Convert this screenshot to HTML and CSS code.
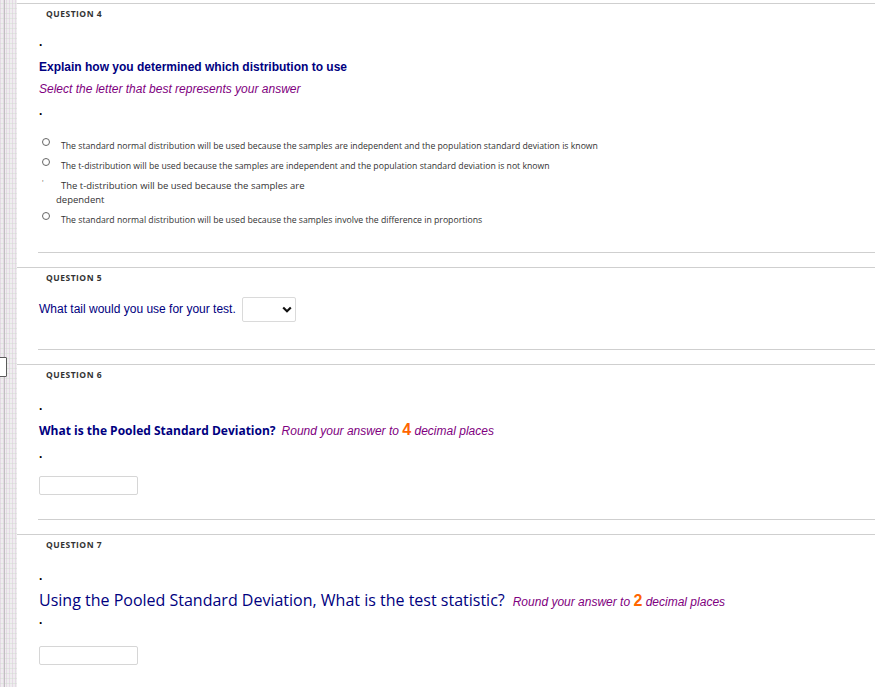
FILE: index.html
```html
<!DOCTYPE html>
<html lang="en">
<head>
<meta charset="utf-8">
<title>Questions</title>
<link rel="stylesheet" href="styles.css">
</head>
<body>
<div class="page">
  <aside class="rail"><span class="rail-tab"></span></aside>
  <main class="main">
    <section class="q q4">
      <h2 class="q-title">QUESTION 4</h2>
      <div class="q-body">
        <p class="dot">.</p>
        <p class="prompt-arial">Explain how you determined which distribution to use</p>
        <p class="hint">Select the letter that best represents your answer</p>
        <p class="dot dot-after-hint">.</p>
        <ul class="options">
          <li class="opt"><span class="radio"></span><span class="opt-text">The standard normal distribution will be used because the samples are independent and the population standard deviation is known</span></li>
          <li class="opt"><span class="radio"></span><span class="opt-text">The t-distribution will be used because the samples are independent and the population standard deviation is not known</span></li>
          <li class="opt opt-big"><span class="tick">'</span><span class="opt-text">The t-distribution will be used because the samples are<br>dependent</span></li>
          <li class="opt"><span class="radio"></span><span class="opt-text">The standard normal distribution will be used because the samples involve the difference in proportions</span></li>
        </ul>
      </div>
    </section>

    <section class="q q5">
      <h2 class="q-title">QUESTION 5</h2>
      <div class="q-body">
        <div class="inline-row">
          <span class="prompt-plain">What tail would you use for your test.</span>
          <span class="select">
            <svg class="chev" width="10" height="7" viewBox="0 0 10 7"><polyline points="1.2,1.5 5,5.2 8.8,1.5" fill="none" stroke="#111" stroke-width="2.2"/></svg>
          </span>
        </div>
      </div>
    </section>

    <section class="q q6">
      <h2 class="q-title">QUESTION 6</h2>
      <div class="q-body">
        <p class="dot dot-top">.</p>
        <p class="prompt-line">
          <span class="prompt-sans-bold">What is the Pooled Standard Deviation?</span>
          <span class="round">Round your answer to <b class="num">4</b> decimal places</span>
        </p>
        <p class="dot">.</p>
        <div class="answer"></div>
      </div>
    </section>

    <section class="q q7">
      <h2 class="q-title">QUESTION 7</h2>
      <div class="q-body">
        <p class="dot dot-top">.</p>
        <p class="prompt-line prompt-line-big">
          <span class="prompt-sans-big">Using the Pooled Standard Deviation, What is the test statistic?</span>
          <span class="round">Round your answer to <b class="num">2</b> decimal places</span>
        </p>
        <p class="dot">.</p>
        <div class="answer"></div>
      </div>
    </section>
  </main>
</div>
</body>
</html>
```

FILE: styles.css
```css
html, body {
  margin: 0;
  padding: 0;
  background: #ffffff;
}

.page {
  display: flex;
  min-height: 687px;
}

.rail {
  position: relative;
  width: 17px;
  flex: 0 0 17px;
  background-color: #efedef;
  background-image:
    repeating-linear-gradient(90deg, rgba(220, 200, 220, 0.5) 0 1px, transparent 1px 3px),
    repeating-linear-gradient(0deg, rgba(200, 222, 200, 0.4) 0 1px, transparent 1px 5px);
}

.rail::after {
  content: "";
  position: absolute;
  left: 4px;
  top: 0;
  bottom: 0;
  width: 1px;
  background: #c2bec2;
}

.rail-tab {
  position: absolute;
  left: -5px;
  top: 357px;
  width: 10px;
  height: 18px;
  border: 1px solid #5a5a5a;
  border-radius: 1px;
  background: #ffffff;
  z-index: 1;
}

.main {
  flex: 1;
  padding-top: 3px;
}

.q {
  border-top: 1px solid #cfcfcf;
}

.q + .q {
  margin-top: 14px;
}

.q-title {
  margin: 0;
  padding-left: 29px;
  font-family: "Open Sans", "DejaVu Sans", sans-serif;
  font-size: 8.5px;
  font-weight: 700;
  letter-spacing: 0.5px;
  line-height: 19px;
  color: #333333;
}

.q-body {
  margin-left: 21px;
  padding-left: 1px;
  border-bottom: 1px solid #cfcfcf;
}

.q7 .q-body { border-bottom: 0; }

.dot {
  margin: 0;
  font-family: "Liberation Sans", Arial, sans-serif;
  font-size: 12px;
  font-weight: 700;
  line-height: 14px;
  color: #000000;
}

.q4 .q-body { padding-bottom: 26px; }
.q4 .dot:first-child { margin-top: 12px; }

.prompt-arial {
  margin: 11px 0 0;
  font-family: "Liberation Sans", Arial, sans-serif;
  font-size: 12px;
  font-weight: 700;
  line-height: 14px;
  color: #000080;
}

.hint {
  margin: 8px 0 0;
  font-family: "Liberation Sans", Arial, sans-serif;
  font-size: 12px;
  font-style: italic;
  line-height: 14px;
  color: #800080;
}

.dot-after-hint { margin-top: 8px; }

.options {
  list-style: none;
  margin: 22px 0 0;
  padding: 0;
}

.opt {
  display: flex;
  align-items: flex-start;
  font-family: "Open Sans", "DejaVu Sans", sans-serif;
  font-size: 8.7px;
  line-height: 12px;
  color: #333333;
}

.opt + .opt { margin-top: 8px; }
.opt-big + .opt { margin-top: 7px; }
.opt + .opt-big { margin-top: 7px; }

.radio {
  flex: 0 0 8px;
  width: 8px;
  height: 8px;
  margin: -2px 0 0 3px;
  border: 1px solid #666666;
  border-radius: 50%;
  box-sizing: border-box;
  background: #ffffff;
}

.tick {
  flex: 0 0 8px;
  width: 8px;
  margin-left: 3px;
  font-size: 7px;
  line-height: 8px;
  color: #555555;
}

.opt-text {
  margin-left: 6px;
  text-indent: 5px;
}

.opt-big {
  font-size: 9.5px;
  line-height: 14px;
}

/* Question 5 */
.q5 .q-body { padding-bottom: 27px; }

.inline-row {
  display: flex;
  align-items: center;
  gap: 6px;
  margin-top: 10px;
}

.prompt-plain {
  font-family: "Liberation Sans", Arial, sans-serif;
  font-size: 12px;
  line-height: 14px;
  color: #000080;
  padding-bottom: 2px;
}

.select {
  display: flex;
  align-items: center;
  justify-content: flex-end;
  width: 54px;
  height: 25px;
  box-sizing: border-box;
  border: 1px solid #dadada;
  border-radius: 2px;
  padding-right: 3px;
}

/* Question 6 / 7 */
.q6 .q-body,
.q7 .q-body { padding-bottom: 24px; }

.dot-top { margin-top: 15px; }

.prompt-line {
  margin: 7px 0 6px;
  line-height: 20px;
  white-space: nowrap;
}

.prompt-line-big {
  margin: 7px 0 1px;
}

.prompt-sans-bold {
  font-family: "Open Sans", "DejaVu Sans", sans-serif;
  font-size: 12px;
  font-weight: 700;
  color: #000080;
  margin-right: 2px;
}

.prompt-sans-big {
  font-family: "Open Sans", "DejaVu Sans", sans-serif;
  font-size: 16px;
  color: #000080;
  margin-right: 4px;
}

.round {
  font-family: "Liberation Sans", Arial, sans-serif;
  font-size: 12px;
  font-style: italic;
  color: #800080;
}

.num {
  font-style: normal;
  font-weight: 700;
  font-size: 16px;
  color: #ff6600;
}

.answer {
  width: 99px;
  height: 19px;
  margin-top: 15px;
  box-sizing: border-box;
  border: 1px solid #d6d6d6;
  border-radius: 2px;
}

.q7 .answer { margin-top: 19px; }
```
